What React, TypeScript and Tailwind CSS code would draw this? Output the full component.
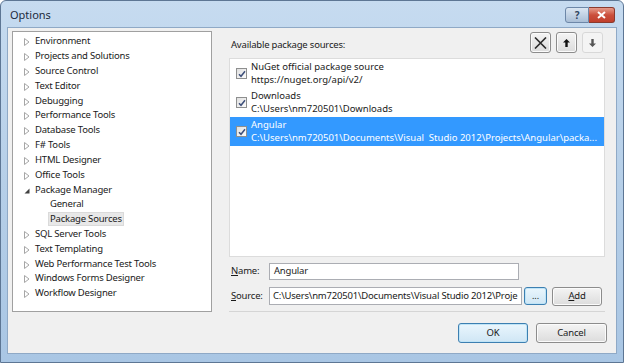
import React from "react";

const TREE: { label: string; kind: "closed" | "open" | "child"; selected?: boolean }[] = [
  { label: "Environment", kind: "closed" },
  { label: "Projects and Solutions", kind: "closed" },
  { label: "Source Control", kind: "closed" },
  { label: "Text Editor", kind: "closed" },
  { label: "Debugging", kind: "closed" },
  { label: "Performance Tools", kind: "closed" },
  { label: "Database Tools", kind: "closed" },
  { label: "F# Tools", kind: "closed" },
  { label: "HTML Designer", kind: "closed" },
  { label: "Office Tools", kind: "closed" },
  { label: "Package Manager", kind: "open" },
  { label: "General", kind: "child" },
  { label: "Package Sources", kind: "child", selected: true },
  { label: "SQL Server Tools", kind: "closed" },
  { label: "Text Templating", kind: "closed" },
  { label: "Web Performance Test Tools", kind: "closed" },
  { label: "Windows Forms Designer", kind: "closed" },
  { label: "Workflow Designer", kind: "closed" },
];

const SOURCES = [
  { name: "NuGet official package source", path: "https://nuget.org/api/v2/" },
  { name: "Downloads", path: "C:\\Users\\nm720501\\Downloads" },
  {
    name: "Angular",
    path: "C:\\Users\\nm720501\\Documents\\Visual\u00a0\u00a0Studio 2012\\Projects\\Angular\\packa...",
    selected: true,
  },
];

function Arrow({ open }: { open: boolean }) {
  if (open) {
    return (
      <svg width="6" height="6" viewBox="0 0 6 6" className="mt-[2px]">
        <polygon points="5.5,0.5 5.5,5.5 0.5,5.5" fill="#404040" />
      </svg>
    );
  }
  return (
    <svg width="6" height="8" viewBox="0 0 6 8" className="mt-[2px]">
      <polygon points="0.5,0.5 5,4 0.5,7.5" fill="#fff" stroke="#a6a6a6" strokeWidth="1" />
    </svg>
  );
}

function Check() {
  return (
    <div className="flex h-[11px] w-[11px] items-center justify-center border border-[#8e8f8f] bg-gradient-to-br from-[#e0e0e0] to-[#fcfcfc]">
      <svg width="8" height="8" viewBox="0 0 8 8">
        <path d="M1 4.2 L3 6.3 L7 1.2" fill="none" stroke="#3d4f7a" strokeWidth="1.5" />
      </svg>
    </div>
  );
}

function WinButton({
  children,
  className = "",
  focused,
}: {
  children: React.ReactNode;
  className?: string;
  focused?: boolean;
}) {
  return (
    <div
      className={
        "flex items-center justify-center rounded-[3px] border bg-gradient-to-b " +
        (focused
          ? "border-[#3c7fb1] from-[#eaf6fd] to-[#cfe6f5] shadow-[inset_0_0_0_1px_#bfe4f7] "
          : "border-[#8c8c8c] from-[#f4f4f4] to-[#dcdcdc] shadow-[inset_0_0_0_1px_#fbfbfb] ") +
        className
      }
    >
      {children}
    </div>
  );
}

export default function App() {
  return (
    <div className="h-[363px] w-[624px] overflow-hidden font-['Segoe_UI','Noto_Sans',sans-serif] text-[9.5px] tracking-[-0.2px] text-[#1a1a1a]">
      <div className="flex h-full w-full flex-col rounded-t-[6px] border border-[#5d7694] bg-gradient-to-b from-[#c6dbf0] via-[#b6cfe8] to-[#a9c6e4]">
        {/* title bar */}
        <div className="flex h-[26px] items-start justify-between pl-[9px] pr-[8px]">
          <span className="mt-[6px] text-[11px] leading-[16px] tracking-normal text-[#1c2b3d]">Options</span>
          <div className="mt-[6px] flex">
            <div className="flex h-[16px] w-[24px] items-center justify-center rounded-l-[3px] border border-[#6d87a8] bg-gradient-to-b from-[#dbe6f2] to-[#a9bed6] text-[10px] font-bold text-[#2f4560]">
              ?
            </div>
            <div className="flex h-[16px] w-[26px] items-center justify-center rounded-r-[3px] border border-l-0 border-[#8a3a2e] bg-gradient-to-b from-[#e59a8a] via-[#cb4f3c] to-[#c03f2c]">
              <svg width="9" height="8" viewBox="0 0 9 8">
                <path d="M1 1 L8 7 M8 1 L1 7" stroke="#fff" strokeWidth="2" />
              </svg>
            </div>
          </div>
        </div>

        {/* client */}
        <div className="mx-[6px] mb-[8px] flex flex-1 flex-col border border-[#8fa9c6] bg-[#f0f0f0]">
          <div className="flex px-[4px] pt-[3px]">
            {/* tree */}
            <div className="h-[281px] w-[200px] border border-[#a0a0a0] bg-white pt-[2px]">
              {TREE.map((t) => (
                <div key={t.label} className="flex h-[14.82px] items-center">
                  {t.kind === "child" ? (
                    <span
                      className={
                        "ml-[35px] px-[1px] leading-[12px] " +
                        (t.selected ? "border border-[#dadada] bg-[#e8e8e8]" : "border border-transparent")
                      }
                    >
                      {t.label}
                    </span>
                  ) : (
                    <>
                      <span className="ml-[11px] flex w-[11px] items-center">
                        <Arrow open={t.kind === "open"} />
                      </span>
                      <span className="leading-[12px]">{t.label}</span>
                    </>
                  )}
                </div>
              ))}
            </div>

            {/* right panel */}
            <div className="ml-[17px] flex w-[376px] flex-col">
              <div className="flex h-[27px] items-start justify-between">
                <span className="ml-[2px] mt-[7px] leading-[14px]">Available package sources:</span>
                <div className="mr-[2px] mt-[1px] flex gap-[5px]">
                  <WinButton className="h-[21px] w-[21px]">
                    <svg width="13" height="12" viewBox="0 0 13 12">
                      <path d="M1 0.5 L12 11.5 M12 0.5 L1 11.5" stroke="#2a2a2a" strokeWidth="1.6" />
                    </svg>
                  </WinButton>
                  <WinButton className="h-[21px] w-[21px]">
                    <svg width="7" height="8" viewBox="0 0 7 8">
                      <path d="M3.5 0 L7 3.5 L4.7 3.5 L4.7 8 L2.3 8 L2.3 3.5 L0 3.5 Z" fill="#111" />
                    </svg>
                  </WinButton>
                  <div className="flex h-[21px] w-[21px] items-center justify-center rounded-[3px] border border-[#d8d8d8] bg-[#f4f4f4]">
                    <svg width="7" height="8" viewBox="0 0 7 8">
                      <path d="M3.5 8 L7 4.5 L4.7 4.5 L4.7 0 L2.3 0 L2.3 4.5 L0 4.5 Z" fill="#555" />
                    </svg>
                  </div>
                </div>
              </div>

              {/* list */}
              <div className="h-[199px] border border-[#dcdcdc] bg-white tracking-normal">
                {SOURCES.map((s) => (
                  <div
                    key={s.name}
                    className={
                      "flex h-[29px] items-center " + (s.selected ? "bg-[#3399ff] text-white" : "")
                    }
                  >
                    <div className="ml-[6px] mr-[4px] shrink-0">
                      <Check />
                    </div>
                    <div className="flex min-w-0 flex-col whitespace-nowrap leading-[12.5px]">
                      <span>{s.name}</span>
                      <span>{s.path}</span>
                    </div>
                  </div>
                ))}
              </div>

              {/* name */}
              <div className="mt-[6px] flex h-[17px] items-center">
                <span className="ml-[2px] w-[38px]">
                  <span className="underline">N</span>ame:
                </span>
                <div className="flex h-[17px] w-[250px] items-center border border-[#abadb3] bg-white pl-[4px]">
                  Angular
                </div>
              </div>

              {/* source */}
              <div className="mt-[7px] flex h-[18px] items-center">
                <span className="ml-[2px] w-[38px]">
                  <span className="underline">S</span>ource:
                </span>
                <div className="flex h-[18px] w-[253px] items-center overflow-hidden whitespace-nowrap border border-[#abadb3] bg-white pl-[3px]">
                  C:\Users\nm720501\Documents\Visual Studio 2012\Proje
                </div>
                <WinButton focused className="ml-[2px] h-[18px] w-[23px] items-end pb-[4px] text-[9px] leading-[8px] tracking-normal">
                  ...
                </WinButton>
                <WinButton className="ml-[5px] h-[19px] w-[50px]">
                  <span>
                    <span className="underline">A</span>dd
                  </span>
                </WinButton>
              </div>

              <div className="mt-[6px] h-[1px] border-t border-[#d5d5d5] bg-white" />
            </div>
          </div>

          {/* bottom buttons */}
          <div className="mt-[11px] flex justify-end gap-[8px] pr-[9px]">
            <WinButton focused className="h-[20px] w-[70px]">
              OK
            </WinButton>
            <WinButton className="h-[20px] w-[71px]">Cancel</WinButton>
          </div>
        </div>
      </div>
    </div>
  );
}
